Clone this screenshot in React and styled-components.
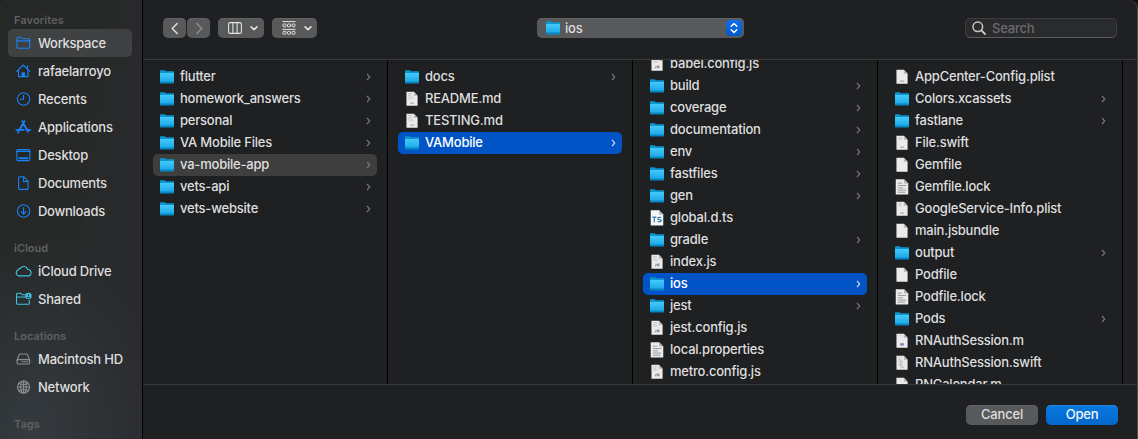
import React from "react";
import styled, { createGlobalStyle } from "styled-components";

const GlobalStyle = createGlobalStyle`
  * { box-sizing: border-box; }
  body {
    margin: 0;
    background: #141517;
    font-family: Inter, "Liberation Sans", sans-serif;
    font-size: 13px;
    color: #dededf;
    -webkit-font-smoothing: antialiased;
  }
`;

const Window = styled.div`
  display: flex;
  width: 1138px;
  height: 439px;
  overflow: hidden;
  background: #1f2022;
  border-right: 1px solid #4a4b4d;
  border-top-left-radius: 3px;
  border-top-right-radius: 9px;
`;

const Sidebar = styled.nav`
  flex: none;
  width: 143px;
  padding: 11px 10px 0 8px;
  display: flex;
  flex-direction: column;
  gap: 14px;
  border-right: 1px solid #000;
  background:
    radial-gradient(ellipse 130px 210px at 30px 439px, #353b40, rgba(53, 59, 64, 0) 100%),
    linear-gradient(100deg, #262827 30%, #2a2b2f 100%);
  overflow: hidden;
`;

const Section = styled.section`
  flex: none;
`;

const SectionTitle = styled.h2`
  margin: 0;
  padding-left: 6px;
  height: 18px;
  line-height: 18px;
  font-size: 11px;
  font-weight: 600;
  letter-spacing: ${(p) => p.$spacing || 0}px;
  color: #5f6162;
`;

const Place = styled.div`
  display: flex;
  align-items: center;
  height: 28px;
  padding-left: 7px;
  gap: 6px;
  border-radius: 5px;
  background: ${(p) => (p.$active ? "#404143" : "transparent")};
  color: ${(p) => p.$tint};
`;

const PlaceIcon = styled.span`
  display: flex;
  justify-content: center;
  width: 17px;
  flex: none;
`;

const Label = styled.span`
  flex: 1;
  white-space: nowrap;
  line-height: 16px;
  font-weight: 500;
  color: ${(p) => p.$color || "#dededf"};
  letter-spacing: ${(p) => p.$spacing ?? -0.21}px;
`;

const FileName = styled(Label)`
  padding-bottom: 2px;
`;

const Main = styled.main`
  flex: 1;
  min-width: 0;
  display: flex;
  flex-direction: column;
`;

const Toolbar = styled.header`
  flex: none;
  height: 60px;
  padding: 18px 20px 21px;
  display: flex;
  align-items: center;
  border-bottom: 1px solid #38393b;
`;

const ToolButton = styled.button`
  display: flex;
  align-items: center;
  justify-content: center;
  gap: 8px;
  width: ${(p) => p.$width}px;
  height: 20px;
  padding: 0 0 0 ${(p) => p.$inset || 0}px;
  margin: 0 ${(p) => p.$after || 0}px 0 0;
  border: 0;
  border-radius: 5px;
  background: #58595b;
  box-shadow: inset 0 1px 0 #626365;
  color: ${(p) => (p.$dim ? "#8b8c8d" : "#e3e3e3")};
`;

const PathPopup = styled.div`
  display: flex;
  align-items: center;
  width: 207px;
  height: 20px;
  margin-left: 220px;
  padding: 0 2px 0 8px;
  gap: 4px;
  border-radius: 5px;
  background: #58595b;
  box-shadow: inset 0 1px 0 #626365;
`;

const Stepper = styled.span`
  display: flex;
  align-items: center;
  justify-content: center;
  width: 16px;
  height: 16px;
  border-radius: 4px;
  background: linear-gradient(#0f6fe6, #0558cc);
  color: #fff;
`;

const SearchField = styled.div`
  display: flex;
  align-items: center;
  gap: 6px;
  width: 152px;
  height: 20px;
  margin-left: auto;
  padding-left: 6px;
  border: 1px solid #3c3d3f;
  border-bottom-color: #5a5b5d;
  border-radius: 5px;
  background: #2a2b2d;
  color: #c9c9ca;
`;

const Columns = styled.div`
  flex: 1;
  min-height: 0;
  display: flex;
  overflow: hidden;
`;

const Column = styled.div`
  flex: none;
  width: 245px;
  padding: 6px 10px 0;
  border-right: 1px solid #000;
  overflow: hidden;
`;

const Scrolled = styled.div`
  margin-top: ${(p) => -p.$by}px;
`;

const Row = styled.div`
  display: flex;
  align-items: center;
  height: 22px;
  padding: 0 6px 0 6px;
  gap: 5px;
  border-radius: 5px;
  color: ${(p) => (p.$state === "active" ? "#c9dcf5" : "#77787a")};
  background: ${(p) =>
    p.$state === "active" ? "#0054c6" : p.$state === "path" ? "#3e3e3f" : "transparent"};
`;

const FileSlot = styled.span`
  display: flex;
  justify-content: center;
  width: 16px;
  flex: none;
`;

const Footer = styled.footer`
  flex: none;
  height: 55px;
  display: flex;
  justify-content: flex-end;
  gap: 8px;
  padding: 20px 19px 0 0;
  border-top: 1px solid #38393b;
`;

const PushButton = styled.button`
  width: 72px;
  height: 20px;
  padding: 0 0 1px;
  border: 0;
  border-radius: 5px;
  font: 500 13px/19px Inter, "Liberation Sans", sans-serif;
  letter-spacing: -0.2px;
  color: ${(p) => (p.$primary ? "#f2f6fc" : "#dededf")};
  background: ${(p) => (p.$primary ? "linear-gradient(#0778e0, #0467c9)" : "#58595b")};
  box-shadow: inset 0 1px 0 ${(p) => (p.$primary ? "#2285e6" : "#626365")};
`;

const Folder = () => (
  <svg width="16" height="14" viewBox="0 0 16 14">
    <defs>
      <linearGradient id="folderFront" x1="0" y1="0" x2="0" y2="1">
        <stop offset="0" stopColor="#45c9fa" />
        <stop offset="1" stopColor="#14a4e6" />
      </linearGradient>
    </defs>
    <path d="M1 .8Q1 .2 1.6 .2H5.6L7 1.2H14.4Q15 1.2 15 1.8V12H1Z" fill="#0b95cf" />
    <path d="M1 3H15V12.6Q15 13.2 14.4 13.2H1.6Q1 13.2 1 12.6Z" fill="url(#folderFront)" />
    <path d="M1 11.6H15V12.6Q15 13.2 14.4 13.2H1.6Q1 13.2 1 12.6Z" fill="#0788c4" />
  </svg>
);

const Page = ({ kind }) => {
  const large = kind === "ts" || kind === "text";
  return (
    <svg
      width={large ? 14 : 13}
      height="16"
      viewBox={large ? "0.3 0.6 13.4 15" : "0.5 0 14 16.6"}
      preserveAspectRatio="none"
    >
      <path d="M1 .8H9L13 4.8V15.2H1Z" fill={kind === "ts" ? "#f6f7f7" : "#ebebec"} />
      <path d="M9 .8L13 4.8H9Z" fill="#b4b5b7" />
      {(kind === "code" || kind === "md") && (
        <path d="M2.6 2.7H7M2.6 4.5H6.5M3 6.3H8" stroke="#bdbdbf" strokeWidth=".8" />
      )}
      {kind === "md" && <path d="M3 8.2H9.6" stroke="#cacacb" strokeWidth=".8" />}
      {kind === "code" && (
        <path d="M6 10V12.2H4.8M9.4 10.4H7.6V11.3H9.2V12.2H7.4" stroke="#77777a" strokeWidth=".9" fill="none" />
      )}
      {(kind === "md" || kind === "plist" || kind === "preview") && (
        <path d="M5 12.6H9.2" stroke="#97979a" strokeWidth="1" />
      )}
      {(kind === "preview" || kind === "swift") && (
        <path d="M2.6 2.9H7M3.4 4.6H6" stroke="#bcbcbe" strokeWidth=".9" />
      )}
      {kind === "swift" && (
        <path d="M3 6.5H8M4 8.5H7.4M3 10.5H8M5 12.6H9.4" stroke="#a8a8aa" strokeWidth=".9" />
      )}
      {kind === "text" && (
        <path d="M3 4.5H7M3 6.7H11M3 8.9H8M3 11H11M3 13H10" stroke="#97989a" strokeWidth=".9" />
      )}
      {kind === "objc" && (
        <>
          <path d="M2.6 2.9H7" stroke="#cfcfd1" strokeWidth=".8" />
          <path d="M5 10.6H9V13H5Z" fill="#9274c4" />
        </>
      )}
      {kind === "ts" && (
        <path
          d="M2.6 7.4H6.4M4.5 7.4V12M11 7.6H8.6Q7.8 7.6 7.8 8.6T8.8 9.6H10Q11 9.6 11 10.6T10 11.6H7.6"
          stroke="#3b86ad"
          strokeWidth="1.2"
          fill="none"
        />
      )}
    </svg>
  );
};

const Chevron = () => (
  <svg width="5" height="8" viewBox="0 0 5 8" fill="none" stroke="currentColor" strokeWidth="1.2">
    <path d="M1 .8L3.7 4L1 7.2" />
  </svg>
);

const DownChevron = () => (
  <svg width="8" height="6" viewBox="0 0 8 6" fill="none" stroke="currentColor" strokeWidth="1.6" strokeLinecap="round" strokeLinejoin="round">
    <path d="M1.1 1.9L4 4.7L6.9 1.9" />
  </svg>
);

const drawings = {
  folder: (
    <path d="M1.7 4.2V3.3Q1.7 2.3 2.7 2.3H5.4L6.9 3.7H13.3Q14.5 3.7 14.5 4.9V12Q14.5 13.3 13.3 13.3H2.9Q1.7 13.3 1.7 12ZM1.7 5.9H14.5" />
  ),
  home: (
    <>
      <path d="M1.4 8.3L8 2L14.6 8.3M12.3 5.5V2.6M3.3 7V13.6H12.7V7" />
      <path d="M6.3 14V9.3H9.7V14Z" fill="currentColor" stroke="none" />
    </>
  ),
  clock: (
    <>
      <circle cx="8.3" cy="8" r="6.2" />
      <path d="M8.3 4.2V8.3H5" />
    </>
  ),
  apps: (
    <>
      <path d="M7 2.2L12.8 12.6M9.2 2.2L4.2 10.8M3.2 12.6L2.7 13.5" strokeWidth="1.9" />
      <path d="M1 10.8H8.6M11.3 10.8H15" strokeWidth="1.7" />
    </>
  ),
  desktop: (
    <>
      <rect x="1.6" y="2.6" width="13" height="11" rx="1.3" />
      <path d="M1.6 4.4H14.6" strokeWidth="1.2" />
      <path d="M4 11.2H12.3" strokeWidth="1.9" />
    </>
  ),
  document: (
    <path d="M3.3 2.9Q3.3 1.7 4.5 1.7H8.4L12.8 6.2V13.2Q12.8 14.4 11.6 14.4H4.5Q3.3 14.4 3.3 13.2ZM8.2 1.9V6.4H12.7" />
  ),
  download: (
    <>
      <circle cx="8.3" cy="8" r="6.2" />
      <path d="M8.3 4.6V11M5.9 8.7L8.3 11.1L10.7 8.7" />
    </>
  ),
  cloud: (
    <path d="M3.7 12.9A3.2 3.2 0 0 1 3.2 6.7Q3.7 5.3 5.1 5.4A4 4 0 0 1 12.4 6.5A3.2 3.2 0 0 1 12.8 12.9Z" />
  ),
  shared: (
    <>
      <path d="M10 3.7H6.9L5.4 2.3H2.4Q1.3 2.3 1.3 3.4V12Q1.3 13.3 2.5 13.3H12.9Q14.1 13.3 14.1 12V9.2M1.3 6H10" />
      <circle cx="13.2" cy="5" r="3.2" fill="currentColor" stroke="none" />
      <path d="M13.2 3.6V4.6M12.2 6.8Q13.2 5.8 14.2 6.8" stroke="#26343a" strokeWidth="1.1" />
    </>
  ),
  disk: (
    <>
      <path d="M1.7 9.2L3.8 4Q4.2 3 5.2 3H11Q12 3 12.4 4L14.5 9.2" />
      <rect x="1.7" y="8.6" width="12.8" height="4.4" rx="1.7" />
      <path d="M6.6 10.8H8.2M9 10.8H10.4M11 10.8H12.6" />
    </>
  ),
  globe: (
    <>
      <circle cx="8.3" cy="8" r="6" />
      <ellipse cx="8.3" cy="8" rx="2.8" ry="6" />
      <path d="M2.3 8H14.3M8.3 2V14M3.5 4.6Q8.3 6.4 13.1 4.6M3.5 11.4Q8.3 9.6 13.1 11.4" />
    </>
  ),
};

const Glyph = ({ name }) => (
  <svg width="17" height="16" viewBox="0 0 16.5 16" fill="none" stroke="currentColor" strokeWidth="1.1" strokeLinejoin="round" strokeLinecap="round">
    {drawings[name]}
  </svg>
);

const BLUE = "#1583f5";
const TEAL = "#3dc3db";
const GRAY = "#8b8d90";

const sections = [
  {
    title: "Favorites",
    tint: BLUE,
    spacing: 0.1,
    places: [
      ["folder", "Workspace", -0.3],
      ["home", "rafaelarroyo"],
      ["clock", "Recents"],
      ["apps", "Applications"],
      ["desktop", "Desktop"],
      ["document", "Documents", -0.24],
      ["download", "Downloads", -0.26],
    ],
  },
  { title: "iCloud", tint: TEAL, places: [["cloud", "iCloud Drive"], ["shared", "Shared"]] },
  { title: "Locations", tint: GRAY, places: [["disk", "Macintosh HD"], ["globe", "Network"]] },
  { title: "Tags", tint: GRAY, places: [] },
];

const columns = [
  {
    items: [
      ["dir", "flutter"],
      ["dir", "homework_answers"],
      ["dir", "personal"],
      ["dir", "VA Mobile Files"],
      ["dir", "va-mobile-app", "path"],
      ["dir", "vets-api"],
      ["dir", "vets-website"],
    ],
  },
  {
    items: [
      ["dir", "docs"],
      ["md", "README.md"],
      ["md", "TESTING.md"],
      ["dir", "VAMobile", "active"],
    ],
  },
  {
    scrolled: 13,
    items: [
      ["code", "babel.config.js"],
      ["dir", "build"],
      ["dir", "coverage"],
      ["dir", "documentation"],
      ["dir", "env"],
      ["dir", "fastfiles"],
      ["dir", "gen"],
      ["ts", "global.d.ts"],
      ["dir", "gradle"],
      ["code", "index.js"],
      ["dir", "ios", "active"],
      ["dir", "jest"],
      ["code", "jest.config.js"],
      ["text", "local.properties"],
      ["code", "metro.config.js"],
    ],
  },
  {
    items: [
      ["plist", "AppCenter-Config.plist"],
      ["dir", "Colors.xcassets"],
      ["dir", "fastlane"],
      ["preview", "File.swift"],
      ["blank", "Gemfile"],
      ["text", "Gemfile.lock"],
      ["preview", "GoogleService-Info.plist"],
      ["blank", "main.jsbundle"],
      ["dir", "output"],
      ["blank", "Podfile"],
      ["text", "Podfile.lock"],
      ["dir", "Pods"],
      ["objc", "RNAuthSession.m"],
      ["swift", "RNAuthSession.swift"],
      ["objc", "RNCalendar.m"],
    ],
  },
];

export default function App() {
  return (
    <>
      <GlobalStyle />
      <Window>
        <Sidebar>
          {sections.map((s) => (
            <Section key={s.title}>
              <SectionTitle $spacing={s.spacing}>{s.title}</SectionTitle>
              {s.places.map(([icon, name, spacing]) => (
                <Place key={name} $tint={s.tint} $active={name === "Workspace"}>
                  <PlaceIcon><Glyph name={icon} /></PlaceIcon>
                  <Label $spacing={spacing}>{name}</Label>
                </Place>
              ))}
            </Section>
          ))}
        </Sidebar>
        <Main>
          <Toolbar>
            <ToolButton $width={23} $after={1} aria-label="Back">
              <svg width="8" height="13" viewBox="0 0 8 13" fill="none" stroke="currentColor" strokeWidth="1.4" strokeLinecap="round">
                <path d="M6.2 1.5L1.2 6.5L6.2 11.5" />
              </svg>
            </ToolButton>
            <ToolButton $width={23} $after={8} $dim aria-label="Forward">
              <svg width="8" height="13" viewBox="0 0 8 13" fill="none" stroke="currentColor" strokeWidth="1.4" strokeLinecap="round">
                <path d="M1.8 1.5L6.8 6.5L1.8 11.5" />
              </svg>
            </ToolButton>
            <ToolButton $width={46} $after={8} $inset={4} aria-label="Column view">
              <svg width="14" height="12" viewBox="0 0 14 12" fill="none" stroke="currentColor" strokeWidth="1.1">
                <rect x=".6" y=".6" width="12.8" height="10.8" rx="1.5" />
                <path d="M4.9.6V11.4M9.1.6V11.4" />
              </svg>
              <DownChevron />
            </ToolButton>
            <ToolButton $width={45} $inset={5} aria-label="Group items">
              <svg width="14" height="14" viewBox="0 0 14 14" fill="none" stroke="currentColor" strokeWidth="1">
                <path d="M.5 .6H13.5M.5 8.4H13.5" />
                {[3, 10.4].map((y) =>
                  [1, 5.5, 10].map((x) => (
                    <rect key={`${x}-${y}`} x={x} y={y} width="3" height="2.8" rx=".7" />
                  ))
                )}
              </svg>
              <DownChevron />
            </ToolButton>
            <PathPopup>
              <Folder />
              <Label>ios</Label>
              <Stepper>
                <svg width="8" height="12" viewBox="0 0 8 12" fill="none" stroke="currentColor" strokeWidth="1.5" strokeLinecap="round" strokeLinejoin="round">
                  <path d="M1.2 4.2L4 1.5L6.8 4.2M1.2 7.8L4 10.5L6.8 7.8" />
                </svg>
              </Stepper>
            </PathPopup>
            <SearchField>
              <svg width="14" height="14" viewBox="0 0 14 14" fill="none" stroke="currentColor" strokeWidth="1.5" strokeLinecap="round">
                <circle cx="5.8" cy="5.8" r="4.8" />
                <path d="M9.4 9.4L13 13" strokeWidth="1.8" />
              </svg>
              <Label $color="#6a6b6d">Search</Label>
            </SearchField>
          </Toolbar>
          <Columns>
            {columns.map((col, i) => (
              <Column key={i}>
                <Scrolled $by={col.scrolled || 0}>
                  {col.items.map(([kind, name, state]) => (
                    <Row key={name} $state={state}>
                      <FileSlot>{kind === "dir" ? <Folder /> : <Page kind={kind} />}</FileSlot>
                      <FileName $color={state === "active" ? "#fff" : undefined}>{name}</FileName>
                      {kind === "dir" && <Chevron />}
                    </Row>
                  ))}
                </Scrolled>
              </Column>
            ))}
          </Columns>
          <Footer>
            <PushButton>Cancel</PushButton>
            <PushButton $primary>Open</PushButton>
          </Footer>
        </Main>
      </Window>
    </>
  );
}
